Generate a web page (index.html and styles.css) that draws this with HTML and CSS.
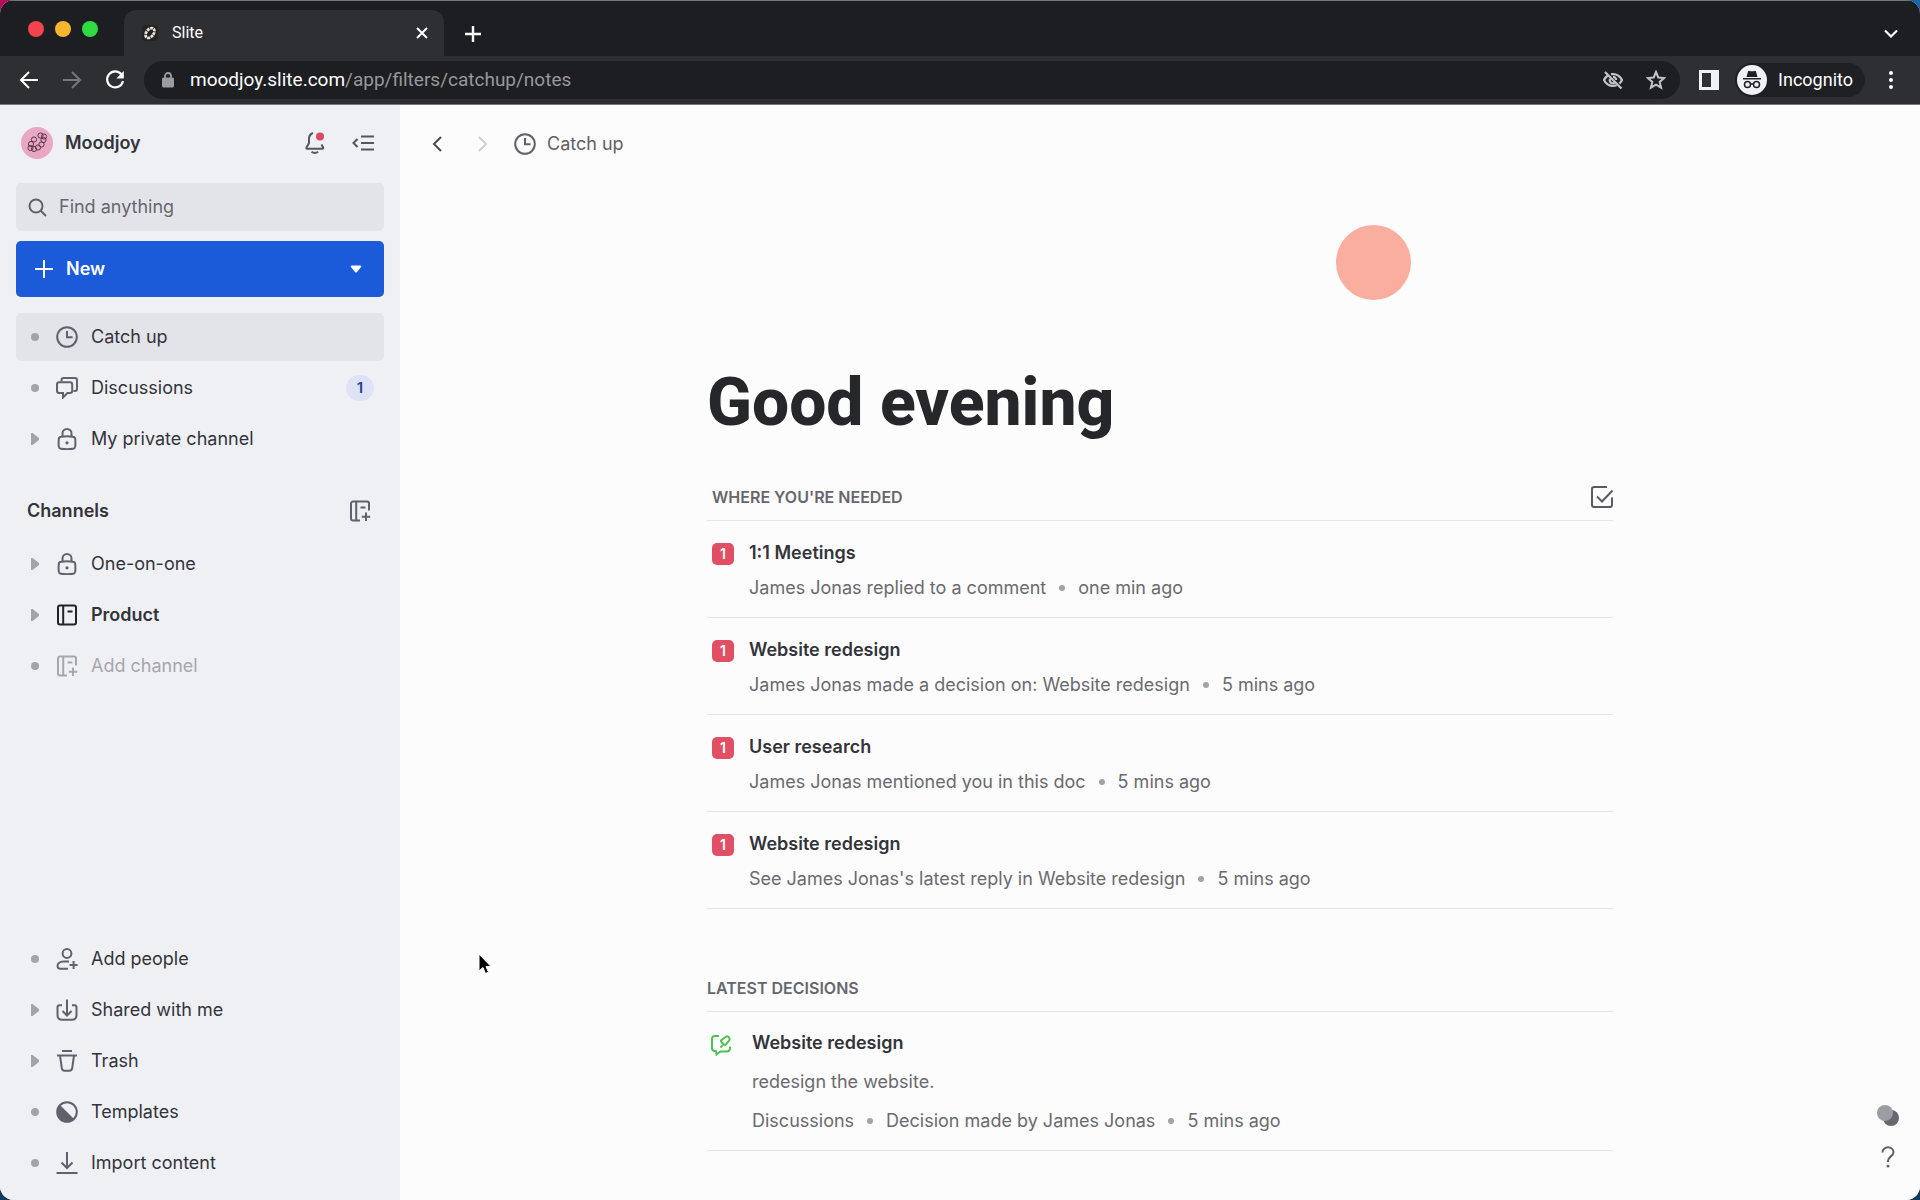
FILE: index.html
```html
<!DOCTYPE html>
<html lang="en">
<head>
<meta charset="utf-8">
<title>Slite</title>
<link rel="stylesheet" href="styles.css">
</head>
<body>
<svg class="sprite" aria-hidden="true">
  <symbol id="clock" viewBox="0 0 22 22"><circle cx="11" cy="11" r="9.8"/><path d="M11 5v6.2h5.6"/></symbol>
  <symbol id="chat" viewBox="0 0 22 22"><path d="M5.500 4.400V3a2 2 0 0 1 2-2H19a2 2 0 0 1 2 2v9a2 2 0 0 1-2 2h-1.600"/><path d="M3 5.200h11a2.200 2.200 0 0 1 2.200 2.200v6.400a2.200 2.200 0 0 1-2.200 2.200h-2.500L7 20.500V16H3.200A2.200 2.200 0 0 1 1 13.800V7.400a2.200 2.200 0 0 1 2-2.200z"/></symbol>
  <symbol id="lock" viewBox="0 0 22 22"><path d="M6.500 8.500V5.500a4.500 4.500 0 0 1 9 0v3"/><path d="M5 8.800Q11 7.600 17 8.800 19 9 19.200 11 19.600 15 19.200 18.500 19 20.400 17 20.700 11 21.600 5 20.700 3 20.400 2.800 18.500 2.400 15 2.800 11 3 9 5 8.800z"/><circle class="solid" cx="11" cy="14.800" r="1.600"/></symbol>
  <symbol id="book" viewBox="0 0 22 22"><rect x="2" y="1.500" width="18" height="19" rx="2"/><path d="M7.200 1.500v19M11.500 7.500h5"/></symbol>
  <symbol id="book-plus" viewBox="0 0 22 22"><path d="M20 10.500V3.500a2 2 0 0 0-2-2H4a2 2 0 0 0-2 2v15a2 2 0 0 0 2 2h7M7.200 1.500v19M11.500 7.500h5M17 12.500v8.500M12.800 16.800h8.400"/></symbol>
  <symbol id="person" viewBox="0 0 22 22"><circle cx="11" cy="5.500" r="4.400"/><path d="M13 13.600H7.500c-3.500 0-6 2-6 4.500 0 1.800 1 2.600 2.800 2.600H12M17.600 13v8M13.600 17h8"/></symbol>
  <symbol id="share" viewBox="0 0 22 22"><path d="M6 6.200H3.500a2 2 0 0 0-2 2V16c0 3 1.800 4.800 4.500 4.800h10c2.700 0 4.500-1.800 4.500-4.800V8.200a2 2 0 0 0-2-2H16M11 .5v16M6.500 12l4.500 4.500 4.500-4.500"/></symbol>
  <symbol id="trash" viewBox="0 0 22 22"><path d="M6 1h10M1 5.500h20M4 5.500l1.800 12.600c.3 2 1 2.600 2.700 2.600h5c1.700 0 2.400-.6 2.700-2.600L18 5.500"/></symbol>
  <symbol id="templates" viewBox="0 0 22 22"><circle cx="11" cy="11" r="9.800"/><path class="solid" d="M4 4 18 18A9.800 9.800 0 0 1 4 4z"/></symbol>
  <symbol id="import" viewBox="0 0 22 22"><path d="M11 0v15.500M5.500 10.500l5.500 5.500 5.500-5.500M.5 21h21"/></symbol>
</svg>

<div class="window">
  <header class="chrome">
    <div class="tabstrip">
      <div class="lights"><i class="light red"></i><i class="light amber"></i><i class="light green"></i></div>
      <div class="tab">
        <svg class="favicon" viewBox="0 0 16 16"><rect width="16" height="16" rx="4" fill="#242424"/><ellipse cx="8" cy="8" rx="3.600" ry="5.600" fill="none" stroke="#e9e2d8" stroke-width="2.800" stroke-dasharray="2.800 .8" transform="rotate(38 8 8)"/></svg>
        <span class="tab-title">Slite</span>
        <button class="bare" aria-label="Close tab"><svg width="12" height="12" viewBox="0 0 12 12" stroke="#fff" stroke-width="2"><path d="M1 1l10 10M11 1 1 11"/></svg></button>
      </div>
      <button class="bare newtab" aria-label="New tab"><svg width="16" height="16" viewBox="0 0 16 16" stroke="#fff" stroke-width="2.400"><path d="M8 0v16M0 8h16"/></svg></button>
      <button class="bare tabsearch" aria-label="Search tabs"><svg width="14" height="10" viewBox="0 0 14 10" fill="none" stroke="#fff" stroke-width="2.200"><path d="M1 1.500l6 6 6-6"/></svg></button>
    </div>
    <div class="toolbar">
      <button class="bare" aria-label="Back"><svg width="20" height="20" viewBox="0 0 20 20" fill="none" stroke="#fff" stroke-width="2"><path d="M19 10H2M10 2l-8 8 8 8"/></svg></button>
      <button class="bare" aria-label="Forward"><svg width="20" height="20" viewBox="0 0 20 20" fill="none" stroke="#77787c" stroke-width="2"><path d="M1 10h17M10 2l8 8-8 8"/></svg></button>
      <button class="bare" aria-label="Reload"><svg width="20" height="20" viewBox="0 0 20 20" fill="none" stroke="#fff" stroke-width="2.200"><path d="M16.500 4.500A8 8 0 1 0 18 11"/><path d="M18.800 1v7.500h-7.500z" fill="#fff" stroke="none"/></svg></button>
      <div class="omnibox">
        <svg width="12" height="16" viewBox="0 0 12 16"><rect y="5.500" width="12" height="10" rx="1.500" fill="#9a9ba2"/><path d="M3 6V4a3 3 0 0 1 6 0v2" fill="none" stroke="#9a9ba2" stroke-width="1.800"/></svg>
        <div class="url">moodjoy.slite.com<span>/app/filters/catchup/notes</span></div>
        <svg width="20" height="20" viewBox="0 0 20 20" fill="none" stroke="#c3c4c8" stroke-width="2.200"><path d="M5 5.500Q2.500 7 1 10q3 6 9 6 2 0 3.500-.7M8 4.200Q15.500 3 19 10q-.9 2-2.600 3.500"/><path d="M7 9a3.200 3.200 0 0 0 4.500 4M10 6.800A3.200 3.200 0 0 1 13.200 10M2 2l16.500 16.500"/></svg>
        <svg width="20" height="20" viewBox="0 0 20 20" fill="none" stroke="#c3c4c8" stroke-width="2"><path d="M10 2l2.300 5.500 6 .5-4.600 3.900 1.400 5.800L10 14.600l-5.100 3.100 1.400-5.800L1.700 8l6-.5z"/></svg>
      </div>
      <svg class="panel" width="20" height="20" viewBox="0 0 20 20"><path fill="#f1f1f6" fill-rule="evenodd" d="M0 0h20v20H0zM3 3v14h9V3z"/></svg>
      <button class="incognito">
        <svg width="30" height="30" viewBox="0 0 30 30"><circle cx="15" cy="15" r="15" fill="#f1f1f6"/><path d="M11 6.500q.5-1 1.500-.6 2.500.8 5 0 1-.4 1.500.6L20.500 12h-11zM6 13h18v1.500H6z" fill="#202124"/><g fill="none" stroke="#202124" stroke-width="1.500"><circle cx="10.500" cy="19.500" r="3"/><circle cx="19.500" cy="19.500" r="3"/><path d="M13.500 19.300q1.500-1 3 0"/></g></svg>
        Incognito</button>
      <button class="bare" aria-label="Menu"><svg width="6" height="20" viewBox="0 0 6 20" fill="#fff"><circle cx="3" cy="3" r="2"/><circle cx="3" cy="10" r="2"/><circle cx="3" cy="17" r="2"/></svg></button>
    </div>
  </header>

  <div class="app">
    <aside class="sidebar">
      <div class="workspace">
        <svg width="32" height="32" viewBox="0 0 32 32"><circle cx="16" cy="16" r="16" fill="#e9a8c2"/><g fill="none" stroke="#5d3350" stroke-width="1"><circle cx="19.500" cy="8.500" r="2.600"/><circle cx="23" cy="9.500" r="2.600"/><circle cx="22.500" cy="13" r="2.600"/><circle cx="20.500" cy="17.500" r="2.600"/><circle cx="17" cy="20.500" r="2.600"/><circle cx="13" cy="22" r="2.600"/><circle cx="9.500" cy="21" r="2.600"/><circle cx="10" cy="17" r="2.600"/><circle cx="13" cy="12.500" r="2.600"/></g></svg>
        <strong>Moodjoy</strong>
        <button class="bare" aria-label="Notifications"><svg width="20" height="24" viewBox="0 0 20 24" fill="none" stroke="#55565f" stroke-width="2"><path d="M8 2Q4 3.500 4 8v4L1.500 16.500q-.5 1.200.8 1.200h15q1.300 0 .8-1.200L16.500 13.500M6.500 20.800q3.300 2.500 6.600 0"/><circle cx="15" cy="5.500" r="4" fill="#e04862" stroke="none"/></svg></button>
        <button class="bare" aria-label="Collapse sidebar"><svg width="22" height="16" viewBox="0 0 22 16" fill="none" stroke="#55565f" stroke-width="2"><path d="M5.500 4 1.500 8l4 4M9 1.500h13M9 8h13M9 14.500h13"/></svg></button>
      </div>
      <label class="search">
        <svg width="19" height="19" viewBox="0 0 19 19" fill="none" stroke="#606168" stroke-width="2"><circle cx="8" cy="8" r="6.500"/><path d="M12.500 12.500l5.500 5.500"/></svg>
        <input type="text" placeholder="Find anything" aria-label="Find anything">
      </label>
      <button class="new">
        <svg width="18" height="18" viewBox="0 0 18 18" stroke="#fff" stroke-width="2"><path d="M9 0v18M0 9h18"/></svg>
        <span>New</span>
        <svg width="12" height="8" viewBox="0 0 12 8"><path d="M1.500.5h9q1.500.3.600 1.600L7 7q-1 1-2 0L.9 2.100Q0 .8 1.500.5z" fill="#fff"/></svg>
      </button>
      <nav class="list">
        <a class="item active" href="#"><i class="dot"></i><svg class="icon"><use href="#clock"/></svg><span>Catch up</span></a>
        <a class="item" href="#"><i class="dot"></i><svg class="icon"><use href="#chat"/></svg><span>Discussions</span><b class="count">1</b></a>
        <a class="item" href="#"><i class="arrow"></i><svg class="icon"><use href="#lock"/></svg><span>My private channel</span></a>
      </nav>
      <div class="channels-head"><h2>Channels</h2><button class="bare" aria-label="Add channel"><svg class="icon"><use href="#book-plus"/></svg></button></div>
      <nav class="list channels">
        <a class="item" href="#"><i class="arrow"></i><svg class="icon"><use href="#lock"/></svg><span>One-on-one</span></a>
        <a class="item unread" href="#"><i class="arrow"></i><svg class="icon"><use href="#book"/></svg><span>Product</span></a>
        <a class="item muted" href="#"><i class="dot"></i><svg class="icon"><use href="#book-plus"/></svg><span>Add channel</span></a>
      </nav>
      <nav class="list bottom">
        <a class="item" href="#"><i class="dot"></i><svg class="icon"><use href="#person"/></svg><span>Add people</span></a>
        <a class="item" href="#"><i class="arrow"></i><svg class="icon"><use href="#share"/></svg><span>Shared with me</span></a>
        <a class="item" href="#"><i class="arrow"></i><svg class="icon"><use href="#trash"/></svg><span>Trash</span></a>
        <a class="item" href="#"><i class="dot"></i><svg class="icon"><use href="#templates"/></svg><span>Templates</span></a>
        <a class="item" href="#"><i class="dot"></i><svg class="icon"><use href="#import"/></svg><span>Import content</span></a>
      </nav>
    </aside>

    <main class="main">
      <div class="crumbs">
        <button class="bare" aria-label="Back"><svg width="10" height="16" viewBox="0 0 10 16" fill="none" stroke="#4b4b50" stroke-width="2"><path d="M9 1 2 8l7 7"/></svg></button>
        <button class="bare" aria-label="Forward"><svg width="10" height="16" viewBox="0 0 10 16" fill="none" stroke="#cfcfd2" stroke-width="2"><path d="M1 1l7 7-7 7"/></svg></button>
        <div class="crumb"><svg class="icon"><use href="#clock"/></svg>Catch up</div>
      </div>
      <div class="page">
        <div class="sun"></div>
        <h1>Good evening</h1>

        <section>
          <div class="section-head inset"><h2>WHERE YOU'RE NEEDED</h2><button class="bare" aria-label="Mark all as read"><svg width="22" height="22" viewBox="0 0 22 22" fill="none" stroke="#5b5b60" stroke-width="2"><path d="M16 1H3a2 2 0 0 0-2 2v16a2 2 0 0 0 2 2h16a2 2 0 0 0 2-2v-7.500M6 10.500l5 5L21.500 4.500"/></svg></button></div>
          <article class="note"><b class="badge">1</b><div><h3>1:1 Meetings</h3><p><span>James Jonas replied to a comment</span><span>one min ago</span></p></div></article>
          <article class="note"><b class="badge">1</b><div><h3>Website redesign</h3><p><span>James Jonas made a decision on: Website redesign</span><span>5 mins ago</span></p></div></article>
          <article class="note"><b class="badge">1</b><div><h3>User research</h3><p><span>James Jonas mentioned you in this doc</span><span>5 mins ago</span></p></div></article>
          <article class="note"><b class="badge">1</b><div><h3>Website redesign</h3><p><span>See James Jonas's latest reply in Website redesign</span><span>5 mins ago</span></p></div></article>
        </section>

        <section class="decisions">
          <div class="section-head"><h2>LATEST DECISIONS</h2></div>
          <article class="note decision">
            <svg width="24" height="24" viewBox="0 0 24 24" fill="none" stroke="#4fc157" stroke-width="2"><path d="M10 3H6Q3 3 3 6v9q0 3 3 3l1 .2.500 3.300 4-3h6q3.500 0 3.500-3.500v-1.500"/><path d="M11.500 14.500l2.200-2.200M17.500 3.200q3.500.3 3 4L16.500 12l-1.300-.2-3-3L12 7.500zM11.500 8l4.800 4.800"/></svg>
            <div><h3>Website redesign</h3><p>redesign the website.</p><p><span>Discussions</span><span>Decision made by James Jonas</span><span>5 mins ago</span></p></div>
          </article>
        </section>
      </div>
    </main>
  </div>
</div>
<div class="floating">
  <button class="bare" aria-label="Theme"><svg width="24" height="24" viewBox="0 0 24 24"><circle cx="15" cy="14" r="8" fill="#66676f"/><circle cx="9" cy="9" r="8" fill="#9c9da3"/></svg></button>
  <button class="bare help" aria-label="Help"><svg width="14" height="22" viewBox="0 0 14 22" fill="none" stroke="#606067" stroke-width="2"><path d="M1.500 6.500C1.500 3.500 4 1.300 7 1.300s5.500 2 5.500 5c0 4-5.500 4.200-5.500 8.700v1"/><circle cx="7" cy="20" r="1.500" fill="#606067" stroke="none"/></svg></button>
</div>
<svg class="cursor" width="14" height="22" viewBox="0 0 14 22"><path d="M1 1v17l4-3.500 2.500 6 3-1.300-2.500-5.700H13z" fill="#000" stroke="#fff" stroke-width="1"/></svg>
</body>
</html>
```
FILE: styles.css
```css
* { box-sizing: border-box; }
body {
  margin: 0;
  background: linear-gradient(90deg, #b80c5c, #1c64a8 60%) top / 100% 50% no-repeat, #123a5c;
  font-family: Inter, "Liberation Sans", sans-serif;
  font-size: 18px;
  line-height: 28px;
  color: #33343a;
}
h1, h2, h3, p { margin: 0; }
a { color: inherit; text-decoration: none; }
button { font: inherit; color: inherit; border: 0; cursor: pointer; }
.bare { display: flex; align-items: center; justify-content: center; padding: 0; background: none; }
.sprite { display: none; }
.icon { width: 22px; height: 22px; flex: none; fill: none; stroke: currentColor; stroke-width: 2; color: #60616c; }
.solid { fill: currentColor; stroke: none; }

.window { display: flex; flex-direction: column; min-height: 100vh; border-radius: 14px; overflow: hidden; background: #fcfcfc; }

/* Browser frame */
.chrome { color: #fff; font-family: Roboto, sans-serif; background: #1d1e21; border-top: 1px solid #77787b; }
.tabstrip { display: flex; align-items: center; height: 55px; padding: 0 22px 0 28px; }
.lights { display: flex; gap: 11px; width: 96px; }
.light { width: 16px; height: 16px; border-radius: 50%; }
.red { background: #f2444e; }
.amber { background: #fab52f; }
.green { background: #2fdb42; }
.tab { display: flex; align-items: center; align-self: flex-end; width: 320px; height: 46px; padding: 0 16px 0 18px; border-radius: 12px 12px 0 0; background: #2e2f33; }
.favicon { width: 16px; height: 16px; margin-right: 14px; }
.tab-title { flex: 1; font-size: 16px; }
.newtab { margin: 10px 0 0 21px; }
.tabsearch { margin: 10px 0 0 auto; }
.toolbar { display: flex; align-items: center; height: 49px; padding: 0 26px 0 19px; gap: 23px; background: #2e2f33; border-bottom: 1px solid #77787b; }
.omnibox { display: flex; align-items: center; gap: 23px; flex: 1; height: 38px; margin-left: -4px; padding: 0 14px 0 18px; border-radius: 19px; background: #1d1e21; }
.url { flex: 1; margin-left: -7px; font-size: 19px; }
.url span { color: #97989c; }
.panel { margin-right: -7px; margin-left: -4px; }
.incognito { display: flex; align-items: center; gap: 11px; height: 34px; padding: 0 12px 0 2px; border-radius: 17px; background: #1f2023; font-size: 18px; }

/* Sidebar */
.app { display: flex; flex: 1; }
.sidebar { display: flex; flex-direction: column; width: 400px; padding: 14px 16px 13px; background: #eff0f4; }
.workspace { display: flex; align-items: center; height: 48px; padding: 0 10px 0 5px; gap: 27px; }
.workspace strong { flex: 1; margin-left: -15px; font-weight: 600; }
.search { display: flex; align-items: center; gap: 12px; height: 48px; margin-top: 16px; padding: 0 12px; border-radius: 5px; background: #e3e4e9; }
.search input { flex: 1; min-width: 0; padding: 0; border: 0; outline: 0; background: none; font: inherit; }
.search input::placeholder { color: #66676d; opacity: 1; }
.new { display: flex; align-items: center; gap: 13px; height: 56px; margin-top: 10px; padding: 0 22px 0 19px; border-radius: 5px; background: #1b5ad9; color: #fff; font-weight: 600; text-align: left; }
.new span { flex: 1; }
.list { display: flex; flex-direction: column; gap: 3px; margin-top: 16px; }
.item { display: flex; align-items: center; height: 48px; padding: 0 10px 0 15px; border-radius: 5px; }
.item span { flex: 1; }
.item .icon { margin: 0 13px 0 17px; }
.active { background: #e3e4e9; }
.dot { width: 8px; height: 8px; border-radius: 50%; background: #a3a4aa; }
.arrow { width: 8px; height: 12px; background: #a3a4aa; clip-path: polygon(0 0, 20% 0, 100% 42%, 100% 58%, 20% 100%, 0 100%); }
.count { display: flex; align-items: center; justify-content: center; width: 28px; height: 26px; border-radius: 13px; background: #dde3f4; color: #26428f; font-size: 15px; font-weight: 600; }
.unread { font-weight: 600; }
.unread .icon { color: #222327; }
.muted, .muted .icon { color: #a6a7ac; }
.channels-head { display: flex; align-items: center; justify-content: space-between; height: 48px; margin-top: 24px; padding: 0 13px 0 11px; }
.channels-head h2 { font-size: 18px; font-weight: 600; }
.channels { margin-top: 5px; }
.bottom { margin-top: auto; }

/* Catch up page */
.main { flex: 1; background: #fcfcfc; }
.crumbs { display: flex; align-items: center; gap: 36px; height: 78px; padding-left: 32px; }
.crumb { display: flex; align-items: center; gap: 11px; margin-left: -10px; color: #606067; }
.page { max-width: 906px; margin: 0 auto; }
.sun { width: 75px; height: 75px; margin: 42px 202px 0 auto; border-radius: 50%; background: #f9ae9f; }
h1 { margin-top: 65px; font-family: Roboto, sans-serif; font-size: 66px; line-height: 76px; font-weight: 800; color: #26272a; }
section { margin-top: 32px; }
.section-head { display: flex; align-items: center; justify-content: space-between; height: 48px; border-bottom: 1px solid #e6e6e8; color: #66666c; }
.inset { padding-left: 5px; }
.section-head h2 { font-size: 16px; font-weight: 600; }
.note { display: flex; padding: 18px 0 15px 5px; border-bottom: 1px solid #e6e6e8; }
.badge { display: flex; align-items: center; justify-content: center; width: 22px; height: 22px; margin: 4px 15px 0 0; border-radius: 5px; background: #e04f63; color: #fff; font-size: 14px; font-weight: 600; }
.note h3 { font-size: 18px; font-weight: 600; }
.note p { margin-top: 7px; color: #6a6a70; }
.note span + span::before { content: ""; display: inline-block; width: 6px; height: 6px; margin: 0 13px; border-radius: 50%; background: #a2a2a7; vertical-align: 3px; }
.decisions { margin-top: 55px; }
.decision { padding: 17px 0 15px 2px; }
.decision > svg { margin: 4px 19px 0 0; }
.decision p { margin-top: 11px; }

/* Page-level overlays */
.floating { position: fixed; right: 20px; bottom: 32px; display: flex; flex-direction: column; align-items: center; gap: 18px; }
.cursor { position: absolute; left: 478px; top: 953px; }
```
